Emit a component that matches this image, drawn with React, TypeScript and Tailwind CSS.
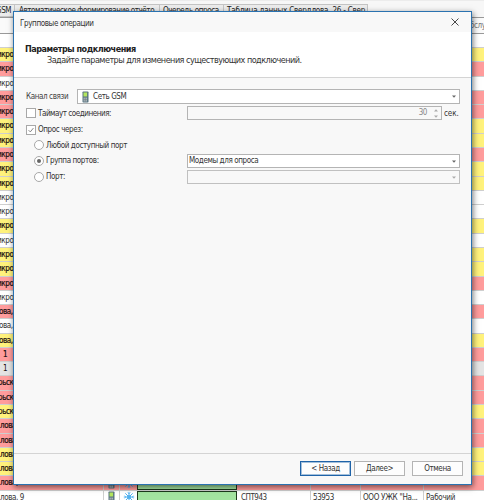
import type { ReactNode } from 'react'
import { clsx } from 'clsx'

type RowTone = 'yellow' | 'red' | 'white' | 'grey'

interface GridRow {
  tone: RowTone
  label: string
}

const TONES: Record<RowTone, string> = {
  yellow: 'bg-[#fff27c]',
  red: 'bg-[#ff9c9c]',
  white: 'bg-white',
  grey: 'bg-[#e4e4e4]',
}

const ROWS: GridRow[] = [
  { tone: 'yellow', label: 'икро' },
  { tone: 'red', label: 'икро' },
  { tone: 'white', label: 'икро' },
  { tone: 'red', label: 'икро' },
  { tone: 'red', label: 'икро' },
  { tone: 'yellow', label: 'икро' },
  { tone: 'yellow', label: 'икро' },
  { tone: 'red', label: 'икро' },
  { tone: 'yellow', label: 'икро' },
  { tone: 'yellow', label: 'икро' },
  { tone: 'white', label: 'икро' },
  { tone: 'white', label: 'икро' },
  { tone: 'yellow', label: 'икро' },
  { tone: 'white', label: 'икро' },
  { tone: 'yellow', label: 'икро' },
  { tone: 'yellow', label: 'икро' },
  { tone: 'red', label: 'икро' },
  { tone: 'white', label: 'икро' },
  { tone: 'red', label: 'ова,' },
  { tone: 'white', label: 'ова,' },
  { tone: 'yellow', label: 'ова,' },
  { tone: 'red', label: '1' },
  { tone: 'grey', label: '1' },
  { tone: 'red', label: 'рьск' },
  { tone: 'red', label: 'рьск' },
  { tone: 'yellow', label: 'рьск' },
  { tone: 'red', label: 'лова' },
  { tone: 'red', label: 'лова' },
  { tone: 'yellow', label: 'лова' },
  { tone: 'yellow', label: 'лова' },
  { tone: 'red', label: 'лова, 9' },
  { tone: 'white', label: 'лова, 9' },
]

// ---------------------------------------------------------------------------
// Icons
// ---------------------------------------------------------------------------

function PhoneIcon() {
  return (
    <svg viewBox="0 0 7 12" className="h-3 w-[7px] shrink-0">
      <rect x="0.5" y="0.5" width="6" height="11" rx="0.8" fill="#587480" />
      <rect x="1.5" y="1.5" width="3.6" height="4" fill="#b4e65e" />
      <rect x="1.5" y="6.6" width="3.6" height="4" fill="#a9b4b8" />
      <path d="M1.5 8.6h3.6M3.3 6.6v4" stroke="#66757c" strokeWidth="0.5" />
    </svg>
  )
}

function SnowflakeIcon() {
  return (
    <svg viewBox="0 0 12 12" className="h-3 w-3" fill="none" stroke="#4fb0ee" strokeWidth="1">
      <path d="M6 0.8v10.4M0.8 6h10.4M2.3 2.3l7.4 7.4M9.7 2.3L2.3 9.7" />
      <path d="M4.6 1.5L6 2.9l1.4-1.4M4.6 10.5L6 9.1l1.4 1.4M1.5 4.6L2.9 6 1.5 7.4M10.5 4.6L9.1 6l1.4 1.4" strokeWidth="0.7" />
      <circle cx="6" cy="6" r="2" fill="#4fb0ee" stroke="none" />
    </svg>
  )
}

function Arrow({ className }: { className?: string }) {
  return (
    <svg viewBox="0 0 4 3" className={clsx('h-[3px] w-1 shrink-0', className)}>
      <path d="M0 0.5h4L2 2.7z" fill="currentColor" />
    </svg>
  )
}

// ---------------------------------------------------------------------------
// Background grid
// ---------------------------------------------------------------------------

function Tab({ className, children }: { className?: string; children: ReactNode }) {
  return (
    <div className={clsx('h-full shrink-0 whitespace-nowrap border border-l-0 border-[#c4c4c4] bg-[#ececec] leading-[12px]', className)}>
      {children}
    </div>
  )
}

function Row({ tone, label }: GridRow) {
  const full = label.endsWith('9')
  return (
    <div
      className={clsx(
        'flex h-[14.29px] shrink-0 items-stretch whitespace-nowrap border-b border-[#cfcfcf] leading-[14.4px]',
        TONES[tone],
        tone === 'white' ? 'text-[#333]' : 'text-[#1c1010]',
      )}
    >
      <div className={clsx('w-[103px] shrink-0', label === '1' && 'pl-[3px]', (tone === 'yellow' || tone === 'red') && '[-webkit-text-stroke:0.2px]')}>
        <span className={clsx(label === 'икро' && '-ml-[3px]', label === 'рьск' && '-ml-[2px]', label === 'ова,' && '-ml-px')}>
          {label}
        </span>
      </div>
      {full && (
        <>
          <div className="flex w-[17px] items-center justify-center border-x border-[#cfcfcf]"><PhoneIcon /></div>
          <div className="flex w-[17px] items-center justify-center"><SnowflakeIcon /></div>
          <div className="w-[100px] border border-[#1d3a1d] bg-[#a3e4a0]" />
          <div className="ml-px w-[73px] border-r border-[#cfcfcf] pl-[3px] tracking-[-0.5px]">СПТ943</div>
          <div className="w-[50px] border-r border-[#cfcfcf] pl-[2px]">53953</div>
          <div className="w-[63px] border-r border-[#cfcfcf] pl-[2px] tracking-[-0.3px]">ООО УЖК "На...</div>
          <div className="pl-[2px] tracking-[-0.3px]">Рабочий</div>
        </>
      )}
    </div>
  )
}

function Background() {
  return (
    <div className="flex h-full flex-col">
      <div className="h-1 shrink-0 border-t border-[#ececec] bg-[#f7f7f7]" />
      <div className="flex h-[13px] shrink-0 bg-[#f7f7f7] text-[#222]">
        <Tab className="w-[15px]"><span className="-ml-[4px]">GSM</span></Tab>
        <Tab className="w-[145px] pl-1 tracking-[-0.42px]">Автоматическое формирование отчёто</Tab>
        <Tab className="w-[64px] pl-[3px]">Очередь опроса</Tab>
        <Tab className="w-[144px] pl-[3px] tracking-[-0.2px]">Таблица данных Свердлова, 26 - Свер</Tab>
      </div>
      <div className="flex h-[17px] shrink-0 justify-end border-y border-[#999] bg-[#fafafa] leading-4 text-[#777]">
        <span className="w-[14px]">бслу</span>
      </div>
      <div className="h-[14px] shrink-0 border-b border-[#cfcfcf] bg-white" />
      {ROWS.map((row, i) => (
        <Row key={i} {...row} />
      ))}
    </div>
  )
}

// ---------------------------------------------------------------------------
// Dialog
// ---------------------------------------------------------------------------

function Checkbox({ checked }: { checked?: boolean }) {
  return (
    <span className="flex h-[10px] w-[10px] shrink-0 items-center justify-center border border-[#a8a8a8] bg-white">
      {checked && (
        <svg viewBox="0 0 8 8" className="h-2 w-2" fill="none" stroke="#777" strokeWidth="0.9">
          <path d="M1.6 4.2l1.7 1.7 3.1-3.8" />
        </svg>
      )}
    </span>
  )
}

function Radio({ checked }: { checked?: boolean }) {
  return (
    <span className="flex h-[10px] w-[10px] shrink-0 items-center justify-center rounded-full border border-[#a8a8a8] bg-white">
      {checked && <span className="h-1 w-1 rounded-full bg-[#666]" />}
    </span>
  )
}

function Dialog() {
  return (
    <div className="absolute top-[11px] left-[13px] flex h-[474px] w-[459px] flex-col border border-[#2a72b0] bg-[#f8f8f8] text-[#333] shadow-[1px_2px_6px_rgba(0,0,0,0.55)]">
      <div className="flex h-5 shrink-0 items-center justify-between pr-3 pl-[6px]">
        <span className="pt-[3px] tracking-[-0.38px]">Групповые операции</span>
        <svg viewBox="0 0 8 8" className="h-2 w-2" fill="none" stroke="#333" strokeWidth="0.9">
          <path d="M0.5 0.5l7 7M7.5 0.5l-7 7" />
        </svg>
      </div>

      <div className="h-[46px] shrink-0 border-b border-[#d4d4d4] bg-white pt-[11px] pl-[11px] text-[9px]">
        <div className="leading-[12px] font-bold tracking-[-0.48px] text-[#222]">Параметры подключения</div>
        <div className="pl-[22px] leading-[11px] tracking-[-0.52px]">Задайте параметры для изменения существующих подключений.</div>
      </div>

      <div className="flex flex-1 flex-col pt-[11px] pl-3">
        <div className="flex h-[15px] items-center">
          <span className="w-[51px] text-[#444]">Канал связи</span>
          <div className="flex h-full w-[383px] items-center border border-[#b4b4b4] bg-white pr-[3px] pl-1">
            <PhoneIcon />
            <span className="ml-[4px] flex-1">Сеть GSM</span>
            <Arrow className="text-[#666]" />
          </div>
        </div>

        <div className="mt-[2px] flex h-[15px]">
          <div className="flex w-[161px] gap-[2px] pt-[2px] leading-[11px] tracking-[-0.46px]">
            <Checkbox />
            <span>Таймаут соединения:</span>
          </div>
          <div className="flex h-[14px] w-[255px] items-center justify-end border border-[#b4b4b4] pr-[3px] text-[#888]">
            <span>30</span>
            <span className="ml-[7px] flex flex-col gap-[3px] text-[#aaa]">
              <Arrow className="rotate-180" />
              <Arrow />
            </span>
          </div>
          <span className="ml-[2px] leading-[15px] tracking-[-0.1px]">сек.</span>
        </div>

        <div className="mt-[3px] flex gap-[2px] pt-px leading-[10px]">
          <Checkbox checked />
          <span>Опрос через:</span>
        </div>

        <div className="mt-[5px] flex h-[10px] gap-[2px] pl-2 leading-[11px]">
          <Radio />
          <span>Любой доступный порт</span>
        </div>

        <div className="mt-[4px] flex h-[14px] items-center">
          <div className="flex w-[161px] gap-[2px] pl-2 leading-[10px]">
            <Radio checked />
            <span>Группа портов:</span>
          </div>
          <div className="flex h-full w-[273px] items-center justify-between border border-[#b4b4b4] bg-white pr-[3px] pl-px">
            <span>Модемы для опроса</span>
            <Arrow className="text-[#666]" />
          </div>
        </div>

        <div className="mt-[2px] flex h-[14px] items-center">
          <div className="flex w-[161px] gap-[2px] pl-2 leading-[10px]">
            <Radio />
            <span>Порт:</span>
          </div>
          <div className="flex h-full w-[273px] items-center justify-end border border-[#c0c0c0] pr-[3px]">
            <Arrow className="text-[#aaa]" />
          </div>
        </div>
      </div>

      <div className="flex h-[31px] shrink-0 justify-end border-t border-[#d4d4d4] pt-[7px] pr-2">
        <button type="button" className="mr-[3px] h-[15px] w-[51px] border border-[#1f63a8] bg-[#fdfdfd] leading-[13px] tracking-[-0.4px] ring-1 ring-[#1f63a8]/40 ring-inset">
          &lt; Назад
        </button>
        <button type="button" className="mr-[7px] h-[15px] w-[51px] border border-[#b4b4b4] bg-[#fdfdfd] leading-[13px] tracking-[-0.4px]">
          Далее&gt;
        </button>
        <button type="button" className="h-[15px] w-[51px] border border-[#b4b4b4] bg-[#fdfdfd] leading-[13px] tracking-[-0.4px]">
          Отмена
        </button>
      </div>
    </div>
  )
}

export default function App() {
  return (
    <div className="relative h-[500px] w-[484px] overflow-hidden bg-white font-['DejaVu_Sans_Condensed','DejaVu_Sans',sans-serif] text-[8px] tracking-[-0.4px]">
      <Background />
      <Dialog />
    </div>
  )
}
